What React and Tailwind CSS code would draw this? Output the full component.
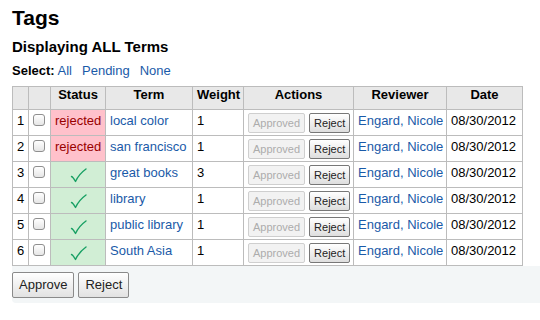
export default function App() {
  const rows = [
    { n: 1, status: "rejected", term: "local color", w: 1 },
    { n: 2, status: "rejected", term: "san francisco", w: 1 },
    { n: 3, status: "ok", term: "great books", w: 3 },
    { n: 4, status: "ok", term: "library", w: 1 },
    { n: 5, status: "ok", term: "public library", w: 1 },
    { n: 6, status: "ok", term: "South Asia", w: 1 },
  ];
  const cell = "border border-[#bcbcbc] px-[4px] align-top overflow-hidden";
  return (
    <div className="w-[540px] h-[320px] bg-white text-black overflow-hidden" style={{ fontFamily: '"Liberation Sans", Arial, sans-serif' }}>
      <div className="pl-[12px] pt-[5px]">
        <h1 className="text-[21px] font-bold leading-[26px]">Tags</h1>
        <h2 className="text-[15px] font-bold leading-[18px] mt-[7px]">Displaying ALL Terms</h2>
        <div className="text-[13px] leading-[16px] mt-[7px]">
          <span className="font-bold">Select:</span>{" "}
          <a className="text-[#1a5aa8]">All</a>
          <a className="text-[#1a5aa8] ml-[10px]">Pending</a>
          <a className="text-[#1a5aa8] ml-[10px]">None</a>
        </div>
        <table className="border-collapse table-fixed w-[510px] mt-[7px] text-[13px] leading-[16px]">
          <colgroup>
            <col className="w-[16px]" />
            <col className="w-[22px]" />
            <col className="w-[55px]" />
            <col className="w-[87px]" />
            <col className="w-[51px]" />
            <col className="w-[110px]" />
            <col className="w-[93px]" />
            <col className="w-[76px]" />
          </colgroup>
          <thead>
            <tr className="bg-[#e8e8e8] h-[23px]">
              <th className={cell}></th>
              <th className={cell}></th>
              <th className={cell + " text-center"}>Status</th>
              <th className={cell + " text-center"}>Term</th>
              <th className={cell + " text-center"}>Weight</th>
              <th className={cell + " text-center"}>Actions</th>
              <th className={cell + " text-center"}>Reviewer</th>
              <th className={cell + " text-center"}>Date</th>
            </tr>
          </thead>
          <tbody>
            {rows.map((r) => (
              <tr key={r.n} className="h-[26px]">
                <td className={cell + " pt-[3px] px-[3px]"}>{r.n}</td>
                <td className={cell + " pt-[4px] px-[4px]"}>
                  <div className="w-[12px] h-[12px] rounded-[3px] border border-[#8f8f8f] bg-gradient-to-b from-white to-[#e6e6e6]"></div>
                </td>
                {r.status === "rejected" ? (
                  <td className={cell + " pt-[3px] bg-[#ffc1cb] text-[#990000] px-[3px] whitespace-nowrap"}>rejected</td>
                ) : (
                  <td className={cell + " bg-[#d1eed5] pt-[6px]"}>
                    <div className="flex justify-center">
                      <svg width="17" height="15" viewBox="0 0 17 15">
                        <path d="M1.5 8.5 Q3 9 5.5 13.5 Q9 6 16 1" fill="none" stroke="#18a064" strokeWidth="1.4" strokeLinecap="round" strokeLinejoin="round" />
                      </svg>
                    </div>
                  </td>
                )}
                <td className={cell + " pt-[3px] text-[#1a5aa8] whitespace-nowrap"}>{r.term}</td>
                <td className={cell + " pt-[3px]"}>{r.w}</td>
                <td className={cell + " pt-[3px] px-[4px]"}>
                  <div className="flex gap-[4px]">
                    <span className="inline-block text-[11px] leading-[16px] px-[4px] py-[1px] border border-[#cfcfcf] bg-[#f2f2f2] text-[#acacac] rounded-[2px]">Approved</span>
                    <span className="inline-block text-[11px] leading-[16px] px-[4px] py-[1px] border border-[#777] bg-gradient-to-b from-white to-[#dedede] text-[#222] rounded-[2px]">Reject</span>
                  </div>
                </td>
                <td className={cell + " pt-[3px] text-[#1a5aa8] whitespace-nowrap"}>Engard, Nicole</td>
                <td className={cell + " pt-[3px] whitespace-nowrap"}>08/30/2012</td>
              </tr>
            ))}
          </tbody>
        </table>
        <div className="bg-[#f3f6f7] rounded-bl-[4px] pt-[6px] pb-[5px] flex gap-[4px] text-[13px]">
          <button className="px-[6px] h-[26px] border border-[#8a8a8a] bg-gradient-to-b from-white to-[#e2e2e2] text-[#222] rounded-[2px]">Approve</button>
          <button className="px-[6px] h-[26px] border border-[#8a8a8a] bg-gradient-to-b from-white to-[#e2e2e2] text-[#222] rounded-[2px]">Reject</button>
        </div>
      </div>
    </div>
  );
}
